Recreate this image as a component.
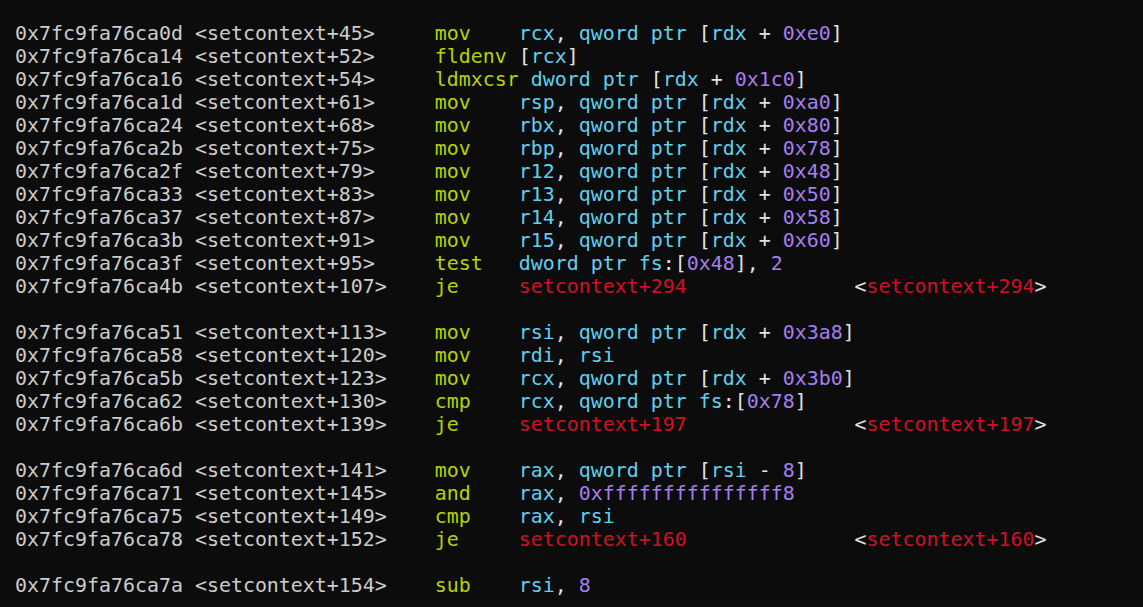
import React from 'react';

type Line = {
  addr: string;
  sym: string;
  op: string;
  args: string;
  target?: string;
} | null;

const lines: Line[] = [
  { addr: '0x7fc9fa76ca0d', sym: '<setcontext+45>', op: 'mov', args: 'rcx, qword ptr [rdx + 0xe0]' },
  { addr: '0x7fc9fa76ca14', sym: '<setcontext+52>', op: 'fldenv', args: '[rcx]' },
  { addr: '0x7fc9fa76ca16', sym: '<setcontext+54>', op: 'ldmxcsr', args: 'dword ptr [rdx + 0x1c0]' },
  { addr: '0x7fc9fa76ca1d', sym: '<setcontext+61>', op: 'mov', args: 'rsp, qword ptr [rdx + 0xa0]' },
  { addr: '0x7fc9fa76ca24', sym: '<setcontext+68>', op: 'mov', args: 'rbx, qword ptr [rdx + 0x80]' },
  { addr: '0x7fc9fa76ca2b', sym: '<setcontext+75>', op: 'mov', args: 'rbp, qword ptr [rdx + 0x78]' },
  { addr: '0x7fc9fa76ca2f', sym: '<setcontext+79>', op: 'mov', args: 'r12, qword ptr [rdx + 0x48]' },
  { addr: '0x7fc9fa76ca33', sym: '<setcontext+83>', op: 'mov', args: 'r13, qword ptr [rdx + 0x50]' },
  { addr: '0x7fc9fa76ca37', sym: '<setcontext+87>', op: 'mov', args: 'r14, qword ptr [rdx + 0x58]' },
  { addr: '0x7fc9fa76ca3b', sym: '<setcontext+91>', op: 'mov', args: 'r15, qword ptr [rdx + 0x60]' },
  { addr: '0x7fc9fa76ca3f', sym: '<setcontext+95>', op: 'test', args: 'dword ptr fs:[0x48], 2' },
  { addr: '0x7fc9fa76ca4b', sym: '<setcontext+107>', op: 'je', args: '', target: 'setcontext+294' },
  null,
  { addr: '0x7fc9fa76ca51', sym: '<setcontext+113>', op: 'mov', args: 'rsi, qword ptr [rdx + 0x3a8]' },
  { addr: '0x7fc9fa76ca58', sym: '<setcontext+120>', op: 'mov', args: 'rdi, rsi' },
  { addr: '0x7fc9fa76ca5b', sym: '<setcontext+123>', op: 'mov', args: 'rcx, qword ptr [rdx + 0x3b0]' },
  { addr: '0x7fc9fa76ca62', sym: '<setcontext+130>', op: 'cmp', args: 'rcx, qword ptr fs:[0x78]' },
  { addr: '0x7fc9fa76ca6b', sym: '<setcontext+139>', op: 'je', args: '', target: 'setcontext+197' },
  null,
  { addr: '0x7fc9fa76ca6d', sym: '<setcontext+141>', op: 'mov', args: 'rax, qword ptr [rsi - 8]' },
  { addr: '0x7fc9fa76ca71', sym: '<setcontext+145>', op: 'and', args: 'rax, 0xfffffffffffffff8' },
  { addr: '0x7fc9fa76ca75', sym: '<setcontext+149>', op: 'cmp', args: 'rax, rsi' },
  { addr: '0x7fc9fa76ca78', sym: '<setcontext+152>', op: 'je', args: '', target: 'setcontext+160' },
  null,
  { addr: '0x7fc9fa76ca7a', sym: '<setcontext+154>', op: 'sub', args: 'rsi, 8' },
];

// split operands into numbers / names / punctuation
function Operands({ text }: { text: string }) {
  const parts = text.match(/0x[0-9a-f]+|\d+|[a-z][a-z0-9]*|[^a-z0-9]+/g) ?? [];
  return (
    <>
      {parts.map((p, i) => {
        if (/^(0x[0-9a-f]+|\d+)$/.test(p)) return <span key={i} className="text-[#a57ef2]">{p}</span>;
        if (/^[a-z]/.test(p)) return <span key={i} className="text-[#5fd0f2]">{p}</span>;
        return <span key={i} className="text-[#e2e2e2]">{p}</span>;
      })}
    </>
  );
}

export default function App() {
  return (
    <div className="min-h-screen w-full bg-[#0c0c0c] pl-[15px] pt-[22px] font-['DejaVu_Sans_Mono',monospace] text-[19.93px] leading-[23px] text-[#cccccc]">
      {lines.map((l, i) =>
        l === null ? (
          <div key={i} className="h-[23px]" />
        ) : (
          <div key={i} className="whitespace-pre">
            <span>{`${l.addr} ${l.sym}`.padEnd(35)}</span>
            <span className="text-[#b5d300]">{l.op.padEnd(6) + ' '}</span>
            {l.target ? (
              <>
                <span className="text-[#d01028]">{l.target.padEnd(28)}</span>
                <span className="text-[#e2e2e2]">{'<'}</span>
                <span className="text-[#d01028]">{l.target}</span>
                <span className="text-[#e2e2e2]">{'>'}</span>
              </>
            ) : (
              <Operands text={l.args} />
            )}
          </div>
        )
      )}
    </div>
  );
}
